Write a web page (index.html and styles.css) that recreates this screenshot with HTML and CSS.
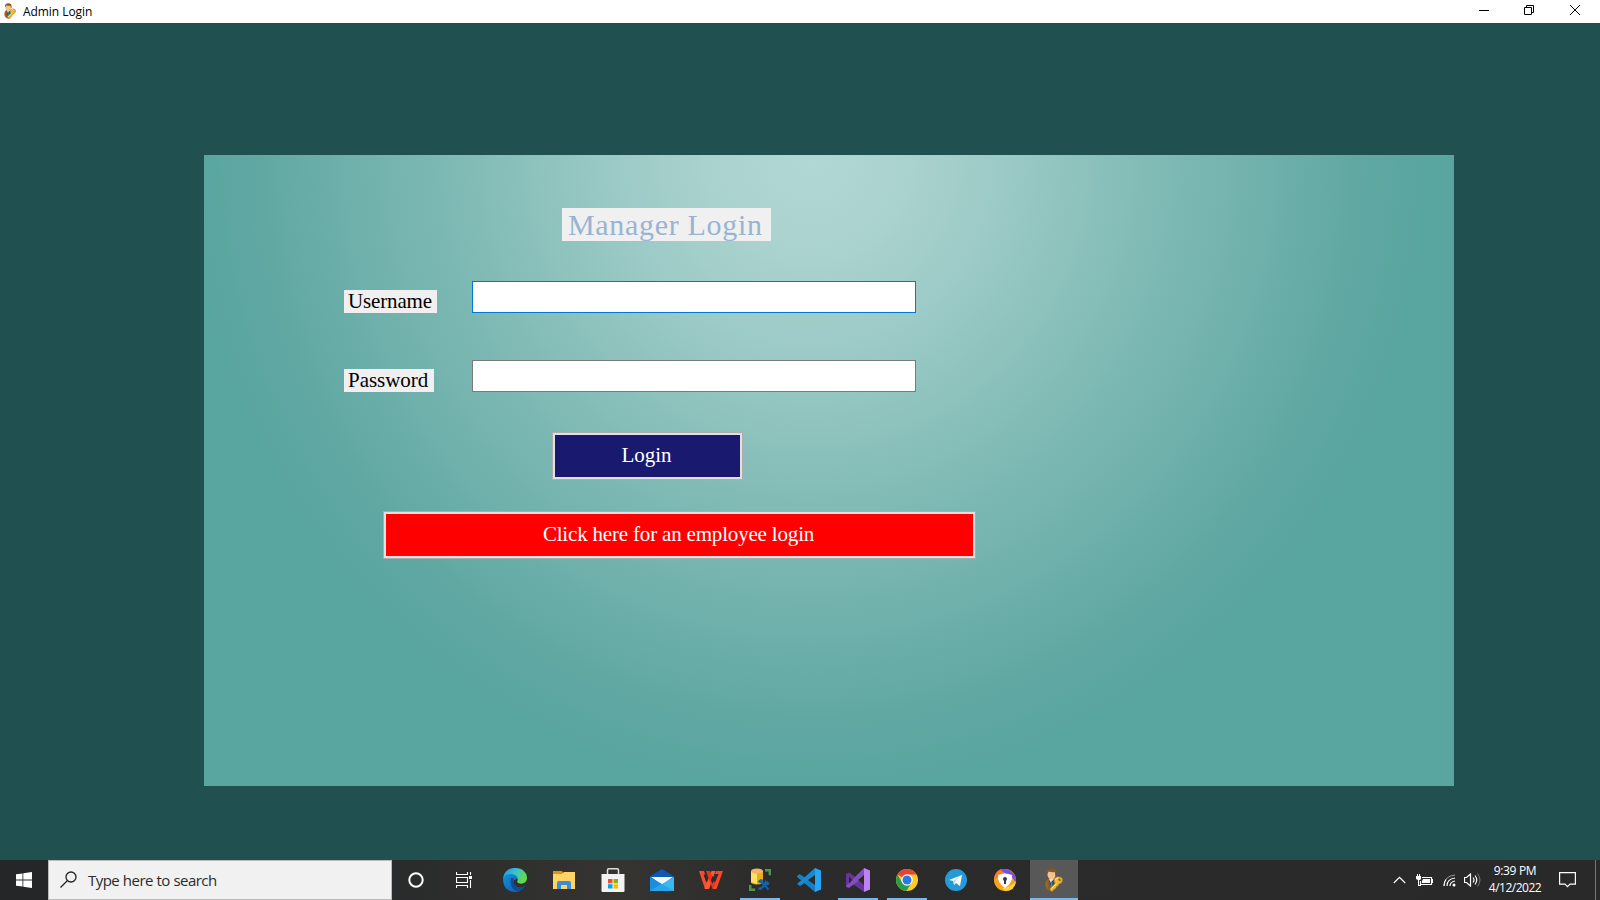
FILE: index.html
```html
<!DOCTYPE html>
<html lang="en">
<head>
<meta charset="utf-8">
<title>Admin Login</title>
<link rel="stylesheet" href="styles.css">
</head>
<body>
<svg class="defs" width="0" height="0" aria-hidden="true">
  <defs>
    <linearGradient id="suit" x1="0" x2="1"><stop offset="0" stop-color="#a8701f"/><stop offset="1" stop-color="#4a3218"/></linearGradient>
    <symbol id="admin" viewBox="0 0 24 24">
      <path d="M4 13q-1.500 5 1 8 2 3 7 2l3-9-2-4-6 0z" fill="url(#suit)"/>
      <path d="M7 12l2 10 3-1 1-10z" fill="#31506e"/>
      <path d="M7 11l2 4 1-2 3-3z" fill="#dbe6ee"/>
      <path d="M9.300 13l-1 7 1.500 2 1.200-2z" fill="#3c86c4"/>
      <ellipse cx="9.500" cy="6.500" rx="4" ry="5" fill="#f0c592"/>
      <path d="M4.700 7Q3.500 1 9 .3q6-.3 5.500 6l-1 1.500-.8-3.800q-3 .8-6-.5z" fill="#8a5720"/>
      <path fill-rule="evenodd" d="M12 12q0-3 4-3.200 4.500 0 4.500 3.200 0 3.500-3.500 4l-1 2-1.500.5-.5 2-2 .8-1.500 2.200-2.500-1 0-2 5-5q-1-1-1-3.500zM17 10.500a1.300 1.300 0 1 0 2 1.500z" fill="#f0b93c" stroke="#a87516" stroke-width=".7"/>
      <path d="M13.500 12q0-2 3-2.200M9.500 20.500l5-5" stroke="#ffe69a" fill="none"/>
    </symbol>
  </defs>
</svg>
<div class="screen">
  <header class="titlebar">
    <svg class="app-icon" width="16" height="16"><use href="#admin"/></svg>
    <span class="app-title">Admin Login</span>
    <div class="window-controls">
      <svg width="46" height="23" viewBox="0 0 46 23"><path d="M19 10.500h10" class="ctl"/></svg>
      <svg width="46" height="23" viewBox="0 0 46 23"><path d="M18.500 7.500h7v7h-7zM20.500 7.500v-2h7v7h-2" class="ctl"/></svg>
      <svg width="46" height="23" viewBox="0 0 46 23"><path d="M18 5l10 10M28 5l-10 10" class="ctl"/></svg>
    </div>
  </header>
  <main class="desktop">
    <form class="panel">
      <h1 class="heading">Manager Login</h1>
      <div class="field"><label for="user">Username</label><input id="user" class="focused" type="text"></div>
      <div class="field"><label for="pass" class="short">Password</label><input id="pass" type="password"></div>
      <button type="button" class="btn login">Login</button>
      <button type="button" class="btn employee">Click here for an employee login</button>
    </form>
  </main>
  <footer class="taskbar">
    <div class="tile"><svg width="16" height="16" viewBox="0 0 16 16"><path fill="#fff" d="M0 2.300l6.500-.9v6.200H0zM7.300 1.200L16 0v7.600H7.300zM0 8.400h6.500v6.200L0 13.700zM7.300 8.400H16V16l-8.700-1.200z"/></svg></div>
    <div class="search">
      <svg width="17" height="17" viewBox="0 0 17 17" fill="none" stroke="#222" stroke-width="1.300"><circle cx="11" cy="6" r="5"/><path d="M7.500 9.500L.5 16.500"/></svg>
      <span>Type here to search</span>
    </div>
    <div class="tile"><svg width="16" height="16" viewBox="0 0 16 16"><circle cx="8" cy="8" r="6.700" fill="none" stroke="#fff" stroke-width="2"/></svg></div>
    <div class="tile view"><svg width="17" height="16" viewBox="0 0 17 16" fill="none" stroke="#fff"><path d="M.5 0v2.500h11V0M.5 5.500h11v5H.5zM.5 16v-2.500h11V16M14.500 0v3M14.500 8v8" stroke-width="1.100"/><path d="M13 4h3v3h-3z" fill="#fff" stroke="none"/></svg></div>
    <div class="apps">
      <div class="tile"><svg width="24" height="24" viewBox="0 0 24 24">
        <defs><linearGradient id="e1" x1="0" x2="1" y2=".4"><stop offset="0" stop-color="#1b8ed8"/><stop offset=".5" stop-color="#35c1d8"/><stop offset="1" stop-color="#63db48"/></linearGradient><linearGradient id="e2" x2="1" y2="1"><stop offset="0" stop-color="#1490df"/><stop offset="1" stop-color="#0c58a8"/></linearGradient></defs>
        <path fill="url(#e2)" d="M0 11Q1 5 7 5q7 0 9 5l-3 1q-5 2-1 7 4 3 10 0-4 6-10 6Q0 23 0 11z"/>
        <path fill="url(#e1)" d="M0 11C1 3 6 0 12 0c8 0 12 5 12 10 0 6-7 7-10 4 2-3 0-8-6-8-4 0-7 2-8 5z"/>
        <path fill="#124b91" d="M8 10q-2 9 5 13 6 0 9-5-6 3-10-1-3-3-1-7z"/></svg></div>
      <div class="tile"><svg width="24" height="24" viewBox="0 0 24 24"><path fill="#dc9708" d="M1 3h9l2 3v4H1z"/><path fill="#ffd464" d="M1 6h9l2-2h11v17H1z"/><path fill="#398ddc" d="M5 21v-6q0-2 2-2h10q2 0 2 2v6h-4v-4H9v4z"/></svg></div>
      <div class="tile"><svg width="24" height="24" viewBox="0 0 24 24"><path d="M6.500 7V2q0-1.200 1.200-1.200h8.600q1.200 0 1.200 1.200v5" fill="none" stroke="#ddd" stroke-width="1.500"/><path fill="#f3f3f3" d="M.5 6h23v17q0 1-1 1h-21q-1 0-1-1z"/><path fill="#f25022" d="M7 11h4.500v4.300H7z"/><path fill="#7fba00" d="M12.500 11H17v4.300h-4.500z"/><path fill="#00a4ef" d="M7 16.200h4.500v4.300H7z"/><path fill="#ffb900" d="M12.500 16.200H17v4.300h-4.500z"/></svg></div>
      <div class="tile"><svg width="24" height="24" viewBox="0 0 24 24"><path fill="#0b5bb5" d="M0 8.500L12 1l12 7.500v6H0z"/><path fill="#f3f6f8" d="M1 9h22l-11 8z"/><path fill="#1b8fdf" d="M0 9l24 14H0z"/><path fill="#39b8f1" d="M24 9v14H0l12-7z"/><path fill="#2aa5ec" d="M0 23l12-7 12 7z"/></svg></div>
      <div class="tile"><svg width="24" height="24" viewBox="0 0 24 24"><path fill="#ff4a2b" d="M0 3h5l4 12-3 6z"/><path fill="#ff5a34" d="M5.500 21L12.500 3h4L10 21z"/><path fill="#f5301a" d="M7 3h4l5 12-2.500 6z"/><path fill="#ff4325" d="M13.500 21L19.500 6H16l1-3h7l-6.500 18z"/><path fill="#2b2b2b" d="M4.500 6.500l2.800 8.200 1.200-3.200L6.700 6.500zM12 12.500l1.700 3.300 1.500-4-1.700-4z"/></svg></div>
      <div class="tile running"><svg width="24" height="24" viewBox="0 0 24 24"><path fill="#e8ae17" d="M3 3v12q6 3 12 0V3z"/><path fill="#ffe064" d="M3 4v10l6 2V5z"/><ellipse cx="9" cy="3.200" rx="6" ry="2.700" fill="#f3b36a"/><path d="M17 2.200h4.800v5M2.200 17v4.800h5" fill="none" stroke="#479b49" stroke-width="2.400"/><path d="M12 21.500l8-8M13 13.500l7.500 8" stroke="#1262aa" stroke-width="2"/><path d="M9.500 13.500l3-2.500 3.500 1-3.500 3.500zM18 11v2.500l1.500 1.500 2.500-.5-1.500 2.500H17l-1-2zM10.500 22v-2.500L13 19l1 2z" fill="#1265b0"/></svg></div>
      <div class="tile"><svg width="24" height="24" viewBox="0 0 24 24"><path fill="#1480c8" d="M0 8l2.500-2L24 20l-6 4L0 9z"/><path fill="#168bd2" d="M0 16l18-16 4 5L3 18z"/><path fill="#27a5f2" d="M18 0l6 2.500v19L18 24z"/><path fill="#2a2a2a" d="M18 7v10l-7-5z"/></svg></div>
      <div class="tile running"><svg width="24" height="24" viewBox="0 0 24 24"><path fill="#68349a" d="M0 6l3-1.500L24 20l-6 4L3 13v3l-1 4-2-1z"/><path fill="#8250bd" d="M0 18L18 0l5 5L3 20z"/><path fill="#bd84f0" d="M18 0l6 2.500v19L18 24z"/><path fill="#2a2a2a" d="M18 7v10l-6-5zM3 8.500v7L6.500 12z"/></svg></div>
      <div class="tile running"><svg width="22" height="22" viewBox="0 0 22 22"><circle cx="11" cy="11" r="11" fill="#ffca28"/><path fill="#e34436" d="M11 11L1.500 5.500A11 11 0 0 1 20.500 5.500H11z"/><path fill="#299b4c" d="M1.500 5.500A11 11 0 0 0 10.500 22l5-8.400L6.300 13.700z"/><circle cx="11" cy="11" r="5.700" fill="#fff"/><circle cx="11" cy="11" r="4.500" fill="#2879eb"/></svg></div>
      <div class="tile"><svg width="22" height="22" viewBox="0 0 22 22"><circle cx="11" cy="11" r="11" fill="#249bd7"/><path fill="#fff" d="M4 11l13-5-2 11-4-3-2 2-.5-4z"/><path fill="#b9d9eb" d="M8 12l6-4-4 5-1 3z"/></svg></div>
      <div class="tile"><svg width="24" height="24" viewBox="0 0 24 24"><circle cx="12" cy="12" r="11" fill="#f6a31d"/><path fill="#7750e8" d="M7 2q7-3 12 2 5 4 4 11l-4-6-6-3z"/><path fill="#ff7b20" d="M1 12Q1 4 8 1q0 3 3 5l-6 3z"/><path fill="#ffd337" d="M9 20q8 0 14-7-1 10-11 10z"/><path fill="#fff" d="M5 7q7-3 14 0 1 8-7 13Q4 15 5 7z"/><circle cx="12" cy="11" r="2" fill="#30384d"/><path d="M11 11h2v5h-2z" fill="#30384d"/></svg></div>
      <div class="tile active"><svg width="24" height="24"><use href="#admin"/></svg></div>
    </div>
    <div class="tray">
      <svg class="chevron" width="13" height="8" viewBox="0 0 13 8"><path d="M.8 7l5.700-5.700L12.200 7" class="tray-line"/></svg>
      <svg class="battery" width="17" height="13" viewBox="0 0 17 13"><path d="M6 3.500h9.500v7h-11V7" class="tray-line"/><path d="M7 5h7v4H6V7zM16 5h1v4h-1zM0 2h5v3L4 6H2L0 5zM1 0h1v2H1zM3 0h1v2H3zM2 6h1v5h2v1H2z" fill="#fff"/></svg>
      <svg class="wifi" width="13" height="13" viewBox="0 0 13 13"><path d="M1 12Q1 2 12 1" stroke="#999" fill="none"/><path d="M4 12Q4 5 12 4M7 12Q7 8 12 7" class="tray-line"/><path d="M1 12Q1 8 3 5.500" class="tray-line"/><circle cx="11" cy="11" r="1.500" fill="#fff"/></svg>
      <svg class="speaker" width="17" height="14" viewBox="0 0 17 14"><path d="M.5 4.500h2l4-3.500v12l-4-3.500h-2zM9 4.500q2 2.500 0 5M11 2.500q3.500 4.500 0 9" class="tray-line"/><path d="M13.500.5q5 6.500 0 13" stroke="#777" fill="none"/></svg>
      <div class="clock"><span class="time">9:39 PM</span><span class="date">4/12/2022</span></div>
      <svg class="note" width="17" height="17" viewBox="0 0 17 17"><path d="M.6 1.600h15.800v11.500H11L8.500 15.600 6 13.100H.6z" class="tray-line"/></svg>
      <div class="peek"></div>
    </div>
  </footer>
</div>
</body>
</html>
```
FILE: styles.css
```css
* { box-sizing: border-box; }
body { margin: 0; font-family: "Open Sans", "Noto Sans", sans-serif; }
.defs { display: block; position: absolute; }
.screen { width: 1600px; height: 900px; display: flex; flex-direction: column; overflow: hidden; }

.titlebar { height: 23px; background: #fff; display: flex; align-items: center; padding-left: 2px; flex: none; }
.app-icon { margin-top: -1px; }
.app-title { margin-left: 5px; font-size: 12px; line-height: 23px; color: #000; letter-spacing: -.06px; }
.window-controls { display: flex; margin-left: auto; margin-right: 2px; }
.ctl { fill: none; stroke: #000; stroke-width: 1; }

.desktop { flex: 1; background: #205050; padding: 132px 146px 74px 204px; display: flex; }
.panel {
  flex: 1;
  padding-top: 53px;
  display: flex;
  flex-direction: column;
  align-items: flex-start;
  background: radial-gradient(ellipse 620px 640px at 605px 0, #b1d8d4 0%, #a9d1cd 17%, #9bcac6 32%, #8cc1bc 45%, #7cb8b3 60%, #6eb0ab 75%, #61a8a3 88%, #59a59f 100%);
  font-family: "Liberation Serif", serif;
}
.heading { margin: 0 0 40px 358px; width: 209px; height: 33px; background: #f0f0f0; color: #99b4d1; padding-left: 6px; font: 400 30px/33px "Century Schoolbook", C059, "Liberation Serif", serif; letter-spacing: .68px; white-space: nowrap; }
.field { display: flex; height: 32px; margin: 0 0 47px 140px; }
.field label { margin-top: 9px; width: 93px; height: 23px; padding-left: 4px; background: #f0f0f0; color: #000; font-size: 21px; line-height: 23px; letter-spacing: -.15px; white-space: nowrap; }
.field label.short { width: 90px; margin-right: 3px; letter-spacing: -.05px; }
.field input { margin: 0 0 0 35px; width: 444px; height: 32px; padding: 0 4px; border: 1px solid #7a7a7a; border-radius: 0; background: #fff; outline: none; }
.field input.focused { border-color: #0078d7; }
.btn { height: 48px; padding: 0 0 1px; border: 1px solid #adadad; box-shadow: inset 0 0 0 2px #e1e1e1; color: #fff; font: 21px/25px "Liberation Serif", serif; letter-spacing: -.18px; }
.login { width: 191px; margin: -7px 0 31px 348px; background: #191970; padding-right: 2px; letter-spacing: 0; }
.employee { width: 593px; margin-left: 179px; background: #f00; padding-right: 2px; }

.taskbar { height: 40px; background: linear-gradient(90deg, #242628 0, #292a2b 24%, #353431 39%, #2b2b2b 48%, #292929 100%); display: flex; flex: none; }
.tile { width: 48px; height: 40px; display: flex; align-items: center; justify-content: center; flex: none; }
.tile.view { width: 47px; padding-left: 1px; }
.search { width: 344px; height: 40px; border: 1px solid #bbb; background: #f1f1f1; display: flex; align-items: center; padding-left: 11px; flex: none; }
.search svg { margin-top: -1px; }
.search span { margin-left: 11px; font-size: 15px; line-height: 20px; color: #2b2b2b; letter-spacing: -.56px; word-spacing: .4px; white-space: nowrap; }
.apps { display: flex; gap: 1px; margin-left: 4px; }
.tile.running { background: linear-gradient(#76b9ed, #76b9ed) 50% 100% / 40px 2px no-repeat; }
.tile.active { background: #585858; border-bottom: 2px solid #76b9ed; padding-top: 2px; }
.tray { flex: 1; display: flex; align-items: center; justify-content: flex-end; }
.tray-line { fill: none; stroke: #fff; stroke-width: 1.2; }
.chevron { margin-right: 10px; }
.battery { margin-right: 10px; }
.wifi { margin: 1px 8px 0 0; }
.speaker { margin-right: 3px; }
.clock { width: 62px; display: flex; flex-direction: column; align-items: center; color: #fff; font-size: 12px; line-height: 17px; margin: -2px 13px 0 0; white-space: nowrap; }
.time { letter-spacing: -.35px; }
.date { letter-spacing: -.5px; }
.note { margin: -1px 19px 0 0; }
.peek { width: 1px; height: 40px; background: #777; margin-right: 4px; }
```
